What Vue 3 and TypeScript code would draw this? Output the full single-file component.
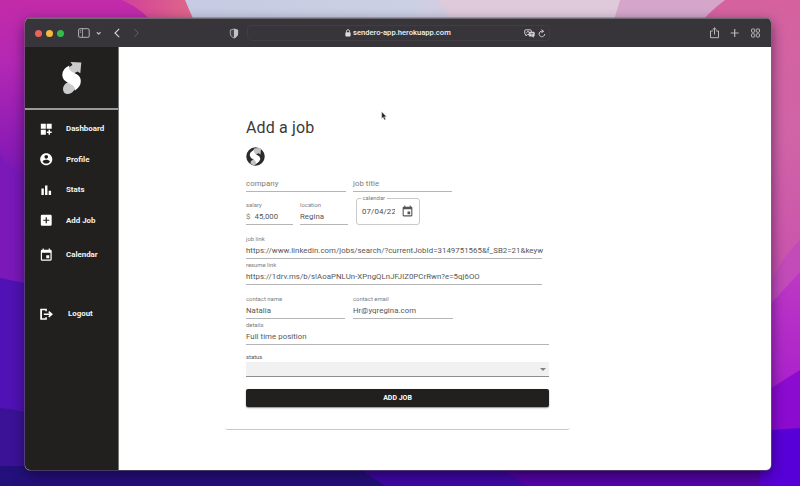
<script setup lang="ts">
import { ref } from 'vue'

interface NavItem {
  label: string
  cls: string
  path: string
}

const calendarPath =
  'M17 12h-5v5h5v-5zM16 1v2H8V1H6v2H5c-1.11 0-1.99.9-1.99 2L3 19a2 2 0 0 0 2 2h14c1.1 0 2-.9 2-2V5c0-1.1-.9-2-2-2h-1V1h-2zm3 18H5V8h14v11z'

const navItems: NavItem[] = [
  {
    label: 'Dashboard',
    cls: 'dashboard',
    path: 'M3 3h8.300v8.300H3zM12.700 3H21v8.300h-8.300zM3 12.700h8.300V21H3zM15.800 13h2.400v2.800H21v2.400h-2.800V21h-2.400v-2.800H13v-2.400h2.800z',
  },
  {
    label: 'Profile',
    cls: 'profile',
    path: 'M12 2C6.48 2 2 6.48 2 12s4.48 10 10 10 10-4.48 10-10S17.52 2 12 2zm0 3c1.66 0 3 1.34 3 3s-1.34 3-3 3-3-1.34-3-3 1.34-3 3-3zm0 14.2c-2.5 0-4.71-1.28-6-3.22.03-1.99 4-3.08 6-3.08 1.99 0 5.97 1.09 6 3.08-1.29 1.94-3.5 3.22-6 3.22z',
  },
  { label: 'Stats', cls: 'stats', path: 'M4 9h4v11H4zM10 4h4v16h-4zM16 13h4v7h-4z' },
  {
    label: 'Add Job',
    cls: 'add',
    path: 'M19 3H5a2 2 0 0 0-2 2v14a2 2 0 0 0 2 2h14a2 2 0 0 0 2-2V5a2 2 0 0 0-2-2zm-2 10h-4v4h-2v-4H7v-2h4V7h2v4h4v2z',
  },
  { label: 'Calendar', cls: 'calendar', path: calendarPath },
  {
    label: 'Logout',
    cls: 'logout',
    path: 'M2 3h11v4h-2.500V5.500H5v13h5.500V17H13v4H2zM17 6.800l6 5.200-6 5.200-1.700-1.700 2.200-2.200H8v-2.600h9.500l-2.200-2.200z',
  },
]

const salary = ref('45,000')
const location = ref('Regina')
const date = ref('07/04/22')
const jobLink = ref('https://www.linkedin.com/jobs/search/?currentJobId=3149751565&f_SB2=21&keyw')
const resumeLink = ref('https://1drv.ms/b/s!AoaPNLUn-XPngQLnJFJlZ0PCrRwn?e=5qj6OO')
const contactName = ref('Natalia')
const contactEmail = ref('Hr@yqregina.com')
const details = ref('Full time position')
</script>

<template>
  <div class="desktop">
    <svg class="wallpaper" viewBox="0 0 800 486" preserveAspectRatio="none" aria-hidden="true">
      <defs>
        <linearGradient id="left" x1="0" y1="0" x2="0" y2="1">
          <stop offset="0" stop-color="#c22ba8" />
          <stop offset=".22" stop-color="#b428b4" />
          <stop offset=".5" stop-color="#8f1cb4" />
          <stop offset=".75" stop-color="#6a15b8" />
          <stop offset="1" stop-color="#4a1090" />
        </linearGradient>
        <linearGradient id="sky" x1="0" y1="0" x2="1" y2="0">
          <stop offset="0" stop-color="#c6cbe3" />
          <stop offset=".4" stop-color="#ccd0e4" />
          <stop offset=".6" stop-color="#dec8dc" />
          <stop offset="1" stop-color="#d8a9cc" />
        </linearGradient>
        <linearGradient id="right" x1="0" y1="0" x2="0" y2="1">
          <stop offset="0" stop-color="#d5629f" />
          <stop offset=".45" stop-color="#d064a6" />
          <stop offset="1" stop-color="#c84fae" />
        </linearGradient>
        <linearGradient id="violet" x1="0" y1="0" x2="0" y2="1">
          <stop offset="0" stop-color="#bd38c4" />
          <stop offset="1" stop-color="#a015d0" />
        </linearGradient>
        <linearGradient id="coral" x1="0" y1="0" x2="1" y2="0">
          <stop offset="0" stop-color="#d3409a" />
          <stop offset="1" stop-color="#e06b88" />
        </linearGradient>
      </defs>
      <rect width="800" height="486" fill="#4007a8" />
      <path d="M0 0H260V280H0Z" fill="url(#left)" />
      <path d="M0 155Q16 172 24 176V290H0Z" fill="#7a19b8" />
      <path d="M0 278L30 284V486H0Z" fill="#5012b4" />
      <path d="M0 408Q60 412 150 486H0Z" fill="#3b1296" />
      <path d="M122 0H190L200 30H158Q145 10 122 0Z" fill="url(#coral)" />
      <path d="M185 0H740V30H198Z" fill="url(#sky)" />
      <path d="M438 0L460 30H710L740 0Z" fill="#dfcadb" />
      <path d="M620 0H740L700 30H611Z" fill="#d5a6ca" />
      <path d="M725 0H800V300H760V30H695Q706 14 725 0Z" fill="url(#right)" />
      <path d="M800 240Q784 255 772 280L760 400H800Z" fill="#c24bb9" />
      <path d="M800 272L765 310V450H800Z" fill="url(#violet)" />
      <path d="M800 370L765 392V450H800Z" fill="#8c0bd0" />
      <path d="M800 428L760 431V486H800Z" fill="#5800d8" />
      <path d="M0 466H355L385 486H0Z" fill="#24107c" />
      <path d="M500 466H760V486H525Z" fill="#5603a9" />
    </svg>

    <section class="window">
      <header class="toolbar">
        <div class="lights"><i class="red"></i><i class="amber"></i><i class="green"></i></div>
        <svg class="tb-panel" viewBox="0 0 24 10" fill="none" stroke="#b4b2b6">
          <rect x=".6" y=".7" width="10.600" height="8.600" rx="1.300" />
          <path d="M4.500.8v8.400M1.900 2.700h1.300M1.900 4.200h1.300" stroke-width=".8" />
          <path d="M18.800 4.200l1.900 1.800 1.900-1.800" stroke-width="1.300" />
        </svg>
        <svg class="tb-arrows" viewBox="0 0 26 10" fill="none">
          <path d="M5.200.8L1 5l4.200 4.200" stroke="#cfced1" stroke-width="1.200" />
          <path d="M20.500 1.200L24.300 5l-3.800 3.800" stroke="#66646a" stroke-width="1" />
        </svg>
        <svg class="tb-shield" viewBox="0 0 10 11">
          <path d="M5 1L8.700 2v3.500C8.700 8 7 9.300 5 10 3 9.300 1.300 8 1.300 5.500V2z" fill="#4a484d" stroke="#b4b2b6" stroke-width=".9" />
          <path d="M5 .8L9 2v3.500C9 8 7 9.500 5 10.300z" fill="#c4c2c6" />
        </svg>
        <div class="address">
          <svg class="lock" viewBox="0 0 6 8">
            <rect x=".4" y="3.200" width="5.200" height="4.300" rx=".7" fill="#dddcde" />
            <path d="M1.500 3.500V2.200a1.500 1.500 0 0 1 3 0v1.300" fill="none" stroke="#dddcde" stroke-width=".9" />
          </svg>
          <span class="url">sendero-app.herokuapp.com</span>
          <svg class="tb-page" viewBox="0 0 22 9" fill="none" stroke="#cfced1">
            <path d="M1.700.8h4.600q1 0 1 1v2.700q0 1-1 1H3.500L2 7V5.500q-1.300 0-1.300-1V1.800q0-1 1-1z" />
            <path d="M2.300 4.200L4 1.800l1.500 2.400" stroke-width=".8" />
            <path d="M5.700 2.800h4q1 0 1 1v2.700q0 1-1 1v1.300L8 7.500H5.700q-1 0-1-1V3.800q0-1 1-1z" fill="#cfced1" stroke="none" />
            <path d="M6.300 4.500h3M7.800 4v2.400" stroke="#55535a" stroke-width=".6" />
            <path d="M20.700 5a2.800 2.800 0 1 1-1.400-2.500M17.500.6l2.200 1.800-2.300 1.300" stroke-width="1" />
          </svg>
        </div>
        <svg class="tb-right" viewBox="0 0 52 12" fill="none" stroke="#b9b7bb">
          <path d="M3.800 4H1.500v6.700h8V4H7.200M5.500 7.500V1M3.500 2.800l2-1.900 2 1.900" />
          <path d="M25.700 2v8M21.700 6h8" stroke-width="1.200" />
          <g>
            <rect x="42.500" y="2" width="3.200" height="3.200" rx=".6" />
            <rect x="47.300" y="2" width="3.200" height="3.200" rx=".6" />
            <rect x="42.500" y="6.800" width="3.200" height="3.200" rx=".6" />
            <rect x="47.300" y="6.800" width="3.200" height="3.200" rx=".6" />
          </g>
        </svg>
      </header>

      <div class="body">
        <nav class="sidebar">
          <div class="brand">
            <svg class="brand-mark" viewBox="0 0 20 34">
              <path d="M8.500 1L19.300 1.500 18.300 12.300 15.500 10.500 9 14 4.500 8 10.500 4z" fill="#cbcbcb" />
              <path d="M2 24.500Q4 20.500 13 19.500L17.500 24 10 31.500Q5 34.500 2 31.500 0 28 2 24.500z" fill="#cbcbcb" />
              <path d="M7.500 4.500Q.2 7.500.3 14 .5 18.500 4.500 20.800L10 24Q13.300 26 13 29.500 18.900 25.500 18.800 20 18.700 15.500 14.700 13.300L9.300 10.500Q6 8.300 7.500 4.500z" fill="#fff" />
            </svg>
          </div>
          <a v-for="item in navItems" :key="item.label" class="nav-item" :class="item.cls">
            <svg viewBox="0 0 24 24"><path :d="item.path" fill="#fff" fill-rule="evenodd" /></svg>
            <span>{{ item.label }}</span>
          </a>
        </nav>

        <main class="page">
          <form class="card" @submit.prevent>
            <h1>Add a job</h1>
            <svg class="badge" viewBox="0 0 20 20">
              <circle cx="10" cy="10" r="9.700" fill="#2b2a2d" />
              <path d="M9 1.300L15.800 1 15.300 7.800 13 6.500 9 8.500 6.500 5z" fill="#c4c4c4" />
              <path d="M5 15Q7 12.500 11 12.500L13.500 15 9.500 18.900Q6 19 4.800 17.300z" fill="#c4c4c4" />
              <path d="M8.300 3.500Q3.600 5.500 4 9 4.400 11.500 7.400 12.800 11 14.400 10.600 17.500 15.300 15 15 12 14.800 9.700 11.800 8.400 7.700 6.700 8.300 3.500z" fill="#fff" />
            </svg>

            <div class="row first">
              <div class="field bare w100"><span class="value">company</span></div>
              <div class="field bare w99"><span class="value">job title</span></div>
            </div>

            <div class="row second">
              <label class="field w47"><span class="label">salary</span><span class="value"><em>$</em>{{ salary }}</span></label>
              <label class="field w48"><span class="label">location</span><span class="value">{{ location }}</span></label>
              <fieldset class="date">
                <legend>calendar</legend>
                <span class="date-value">{{ date }}</span>
                <svg viewBox="0 0 24 24"><path :d="calendarPath" fill="#555" fill-rule="evenodd" /></svg>
              </fieldset>
            </div>

            <label class="field link job"><span class="label">job link</span><span class="value">{{ jobLink }}</span></label>
            <label class="field link resume"><span class="label">resume link</span><span class="value">{{ resumeLink }}</span></label>

            <div class="row contact">
              <label class="field w99"><span class="label">contact name</span><span class="value">{{ contactName }}</span></label>
              <label class="field w100"><span class="label">contact email</span><span class="value">{{ contactEmail }}</span></label>
            </div>

            <label class="field details"><span class="label">details</span><span class="value">{{ details }}</span></label>

            <span class="label status">status</span>
            <div class="select"><i></i></div>
            <button type="submit">ADD JOB</button>
          </form>
        </main>
      </div>
    </section>

    <svg class="cursor" viewBox="0 0 6 10">
      <path d="M.7.700V7.500L2.200 6.200 3.300 8.900 4.600 8.300 3.500 5.800H5.500z" fill="#222" stroke="#ddd" stroke-width=".5" />
    </svg>
  </div>
</template>

<style>
body {
  margin: 0;
  overflow: hidden;
}
</style>

<style scoped>
.desktop {
  position: relative;
  box-sizing: border-box;
  width: 800px;
  height: 486px;
  padding: 18px 29px 16px 24.500px;
  overflow: hidden;
  font-family: Roboto, 'Liberation Sans', sans-serif;
}
.wallpaper {
  position: absolute;
  inset: 0;
  width: 100%;
  height: 100%;
}
.window {
  position: relative;
  display: flex;
  flex-direction: column;
  height: 452px;
  border-radius: 5px;
  overflow: hidden;
  background: #fff;
  box-shadow: 0 0 0 0.500px #77717b, 0 5px 14px rgba(15, 0, 40, 0.600);
}
.toolbar {
  box-sizing: border-box;
  display: flex;
  align-items: center;
  flex: none;
  height: 29px;
  padding: 0 10px 0 10.500px;
  background: #37343a;
  border-top: 1px solid #6e6b70;
}
.lights {
  display: flex;
  gap: 4px;
}
.lights i {
  width: 7px;
  height: 7px;
  border-radius: 50%;
}
.red { background: #ee625c; }
.amber { background: #f5b940; }
.green { background: #35bb4b; }
.tb-panel { width: 24px; height: 10px; margin-left: 14px; }
.tb-arrows { width: 26px; height: 10px; margin-left: 12px; }
.tb-shield { width: 10px; height: 11px; margin-left: 89px; }
.address {
  box-sizing: border-box;
  display: flex;
  align-items: center;
  width: 303px;
  height: 16px;
  margin-left: 8px;
  padding: 0 3px 0 97px;
  border: 1px solid #403d43;
  border-radius: 4px;
}
.lock { width: 6px; height: 8px; }
.url {
  margin-left: 2px;
  color: #f2f2f3;
  font: 500 7.600px/14px Roboto, sans-serif;
}
.tb-page { width: 22px; height: 9px; margin-left: auto; }
.tb-right { width: 52px; height: 12px; margin-left: auto; }
.body {
  display: flex;
  flex: 1;
}
.sidebar {
  box-sizing: border-box;
  display: flex;
  flex-direction: column;
  width: 94px;
  background: #21201f;
  border-right: 1px solid #777;
}
.brand {
  display: flex;
  align-items: center;
  justify-content: center;
  height: 61px;
  border-bottom: 2px solid #999;
  margin-bottom: 11px;
}
.brand-mark { width: 20px; height: 34px; margin-top: 0; margin-left: 2px; }
.nav-item {
  display: flex;
  align-items: center;
  height: 16px;
  margin-bottom: 14.500px;
  padding-left: 14px;
  color: #f4f4f4;
  font: 700 7.900px/16px Roboto, sans-serif;
}
.nav-item svg { width: 14.500px; height: 14.500px; margin-right: 13px; }
.nav-item.add { margin-bottom: 18.500px; }
.nav-item.calendar { margin-bottom: 43px; }
.nav-item.logout span { margin-left: 2px; }
.nav-item.logout svg,
.nav-item.calendar svg { position: relative; left: 0.500px; }
.page {
  flex: 1;
  padding: 0 0 40px 106.500px;
}
.card {
  box-sizing: border-box;
  display: flex;
  flex-direction: column;
  width: 345px;
  height: 382.500px;
  padding: 70.500px 21px 0;
  border-bottom: 1px solid #c8c8c8;
  border-radius: 3px;
}
h1 {
  margin: 0;
  height: 20px;
  color: #3a3a3a;
  font: 400 16px/20px Roboto, sans-serif;
  letter-spacing: 0.150px;
}
.badge { width: 19px; height: 19px; margin-top: 9px; }
.row { display: flex; }
.first { gap: 7px; margin-top: 10px; }
.second { gap: 7px; height: 30px; margin-top: 3.500px; align-items: flex-end; }
.field {
  box-sizing: border-box;
  display: flex;
  flex-direction: column;
  height: 23px;
  border-bottom: 1px solid #b5b5b5;
}
.field.bare { height: 16px; }
.field.bare .value { color: #7c7c7c; }
.w47 { width: 47px; }
.w48 { width: 48px; }
.w99 { width: 99px; }
.w100 { width: 100px; }
.label,
legend {
  color: #7c7c7c;
  font: 400 5.900px/7px Roboto, sans-serif;
}
.value {
  color: #565656;
  font: 400 7.800px/16px Roboto, sans-serif;
  letter-spacing: 0.060px;
  white-space: nowrap;
}
.value em { margin-right: 4px; color: #7c7c7c; font-style: normal; }
.date {
  box-sizing: border-box;
  display: flex;
  align-items: center;
  justify-content: space-between;
  width: 63.500px;
  height: 30px;
  margin: 0 0 0 1px;
  padding: 0 4.500px 3px 5px;
  min-width: 0;
  border: 1px solid #cacaca;
  border-radius: 3px;
}
legend { padding: 0 2px; margin-left: -1.500px; }
.date-value {
  width: 32.500px;
  overflow: hidden;
  color: #4c4c4c;
  font: 400 7.800px/19px Roboto, sans-serif;
  letter-spacing: 0.150px;
}
.date svg { width: 13px; height: 13px; }
.link { width: 296px; }
.job { margin-top: 10.500px; }
.resume { margin-top: 3.500px; }
.contact { gap: 8px; margin-top: 10.500px; }
.details { margin-top: 3.500px; }
.status { margin-top: 8.500px; color: #555; }
.select {
  box-sizing: border-box;
  display: flex;
  align-items: center;
  justify-content: flex-end;
  height: 15px;
  margin-top: 1px;
  padding: 1px 3.500px 0 0;
  background: #f1f1f1;
  border-bottom: 1px solid #8e8e8e;
}
.select i {
  border: 3px solid transparent;
  border-top: 3px solid #808080;
  border-bottom: 0;
}
button {
  height: 18px;
  margin-top: 12px;
  padding: 0;
  border: 0;
  border-radius: 2px;
  background: #21201f;
  box-shadow: 0 1px 1.500px rgba(0, 0, 0, 0.450);
  color: #fff;
  font: 700 7px/18px Roboto, sans-serif;
}
.cursor {
  position: absolute;
  left: 381px;
  top: 111px;
  width: 6px;
  height: 10px;
}
</style>
